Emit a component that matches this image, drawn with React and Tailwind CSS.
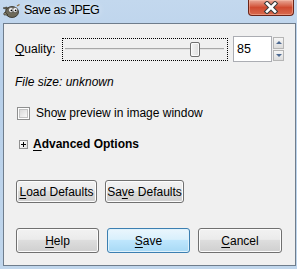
import React from "react";

const font = { fontFamily: '"Liberation Sans", Arial, sans-serif' };

function GimpIcon() {
  return (
    <svg width="18" height="14" viewBox="0 0 18 14">
      <path d="M1 4 L5 3 L6 6 Z" fill="#6b6655" stroke="#2e2b22" strokeWidth="0.6" />
      <ellipse cx="10" cy="8" rx="6.5" ry="5.5" fill="#6e6a5a" stroke="#2e2b22" strokeWidth="0.8" />
      <path d="M3 8 Q1 9 2 11 L6 11 Z" fill="#8a8672" stroke="#2e2b22" strokeWidth="0.6" />
      <circle cx="9" cy="6" r="2.4" fill="#fff" stroke="#333" strokeWidth="0.5" />
      <circle cx="13.2" cy="6" r="2.4" fill="#fff" stroke="#333" strokeWidth="0.5" />
      <circle cx="9.4" cy="6.3" r="0.9" fill="#000" />
      <circle cx="13.6" cy="6.3" r="0.9" fill="#000" />
      <path d="M15 2 L17.5 0.5" stroke="#8a6a3a" strokeWidth="1.2" />
    </svg>
  );
}

function CloseButton() {
  return (
    <div className="flex h-[16px] w-[46px] items-center justify-center rounded-b-[4px] border border-t-0 border-[#6b2418] bg-gradient-to-b from-[#e8a898] via-[#cf4a30] to-[#d86a4e] shadow-[inset_0_0_0_1px_rgba(255,200,180,0.45)]">
      <svg width="16" height="13" viewBox="0 0 16 13">
        <path d="M4 2.5 L12 10.5 M12 2.5 L4 10.5" stroke="#3a3a3a" strokeWidth="4.6" strokeLinecap="square" />
        <path d="M4 2.5 L12 10.5 M12 2.5 L4 10.5" stroke="#ffffff" strokeWidth="2.6" strokeLinecap="square" />
      </svg>
    </div>
  );
}

function Btn({ children, w, h, primary }) {
  return (
    <div
      className={`flex items-center justify-center rounded-[3px] border text-[12px] text-black ${
        primary
          ? "border-[#3c7fb1] bg-[linear-gradient(#eaf6fd_0%,#d9f0fc_45%,#bee6fd_50%,#a7d9f5_100%)] shadow-[inset_0_0_0_1px_#dff2fc]"
          : "border-[#707070] bg-[linear-gradient(#f2f2f2_0%,#ebebeb_45%,#dddddd_50%,#cfcfcf_100%)] shadow-[inset_0_0_0_1px_#fcfcfc]"
      } ${w} ${h}`}
    >
      {children}
    </div>
  );
}

export default function App() {
  return (
    <div
      className="flex h-[269px] w-[297px] flex-col overflow-hidden bg-[linear-gradient(180deg,#c3d8ee_0%,#b8d0ea_30%,#c0d6ec_100%)]"
      style={font}
    >
      {/* title bar */}
      <div className="flex h-[23px] items-start">
        <div className="ml-[2px] mt-[4px]">
          <GimpIcon />
        </div>
        <div className="ml-[4px] mt-[3px] text-[12.5px] leading-[14px] tracking-[-0.5px] text-black [text-shadow:0_0_6px_rgba(255,255,255,0.9)]">
          Save as JPEG
        </div>
        <div className="flex-1" />
        <div className="mr-[3px]">
          <CloseButton />
        </div>
      </div>

      {/* client area */}
      <div className="ml-[3px] flex h-[243px] w-[293px] flex-col border border-[#6f7d8c] bg-[#f0f0f0] pl-[11px] text-[12px] text-black">
        <div className="mt-[12px] flex h-[26px] items-center">
          <div className="w-[47px]">
            <span className="underline underline-offset-2">Q</span>uality:
          </div>
          <div className="relative h-[23px] w-[166px] border border-dotted border-black">
            <div className="absolute left-[2px] right-[3px] top-[9px] h-[1px] bg-[#a8a8a8]" />
            <div className="absolute left-[2px] right-[3px] top-[10px] h-[1px] bg-[#e4e4e4]" />
            <div className="absolute left-[127px] top-[3px] h-[15px] w-[10px] rounded-[2px] border border-[#6f6f6f] bg-[linear-gradient(90deg,#f4f4f4,#dedede)] shadow-[inset_0_0_0_1px_#fbfbfb]" />
          </div>
          <div className="ml-[5px] flex h-[26px] w-[39px] items-center border border-[#abadb3] bg-white pl-[3px] text-[12.5px]">
            85
          </div>
          <div className="ml-[1px] flex h-[24px] w-[11px] flex-col gap-[1px]">
            <div className="flex h-[11.5px] items-center justify-center border border-[#b5b5b5] bg-[linear-gradient(#f6f6f6,#dcdcdc)]">
              <div className="h-0 w-0 border-x-[3px] border-b-[3px] border-x-transparent border-b-[#4e6a92]" />
            </div>
            <div className="flex h-[11.5px] items-center justify-center border border-[#b5b5b5] bg-[linear-gradient(#f6f6f6,#dcdcdc)]">
              <div className="h-0 w-0 border-x-[3px] border-t-[3px] border-x-transparent border-t-[#4e6a92]" />
            </div>
          </div>
        </div>

        <div className="mt-[13px] h-[14px] leading-[14px] italic">File size: unknown</div>

        <div className="mt-[17px] flex h-[14px] items-center">
          <div className="ml-[2px] flex h-[13px] w-[13px] items-center justify-center border border-[#8e8f8f] bg-white">
            <div className="h-[9px] w-[9px] border border-[#c2c2c2] bg-[linear-gradient(135deg,#dadada,#f8f8f8)]" />
          </div>
          <div className="ml-[6px]">
            Sho<span className="underline underline-offset-2">w</span> preview in image window
          </div>
        </div>

        <div className="mt-[17px] flex h-[14px] items-center">
          <div className="ml-[4px] flex h-[9px] w-[9px] items-center justify-center border border-[#919191] bg-[linear-gradient(135deg,#ffffff,#e0e0e0)] text-[9px] leading-none">
            <svg width="5" height="5" viewBox="0 0 5 5">
              <path d="M0 2.5 H5 M2.5 0 V5" stroke="#000" strokeWidth="1" />
            </svg>
          </div>
          <div className="ml-[5px] font-bold">
            <span className="underline underline-offset-2">A</span>dvanced Options
          </div>
        </div>

        <div className="mt-[29px] flex gap-[8px] pl-[1px]">
          <Btn w="w-[81px]" h="h-[23px]">
            <span className="underline underline-offset-2">L</span>oad Defaults
          </Btn>
          <Btn w="w-[79px]" h="h-[23px]">
            Sa<span className="underline underline-offset-2">v</span>e Defaults
          </Btn>
        </div>

        <div className="mt-[25px] flex gap-[8px] pl-[1px]">
          <Btn w="w-[83px]" h="h-[25px]">
            <span className="underline underline-offset-2">H</span>elp
          </Btn>
          <Btn w="w-[83px]" h="h-[25px]" primary>
            <span className="underline underline-offset-2">S</span>ave
          </Btn>
          <Btn w="w-[84px]" h="h-[25px]">
            <span className="underline underline-offset-2">C</span>ancel
          </Btn>
        </div>
      </div>
    </div>
  );
}
